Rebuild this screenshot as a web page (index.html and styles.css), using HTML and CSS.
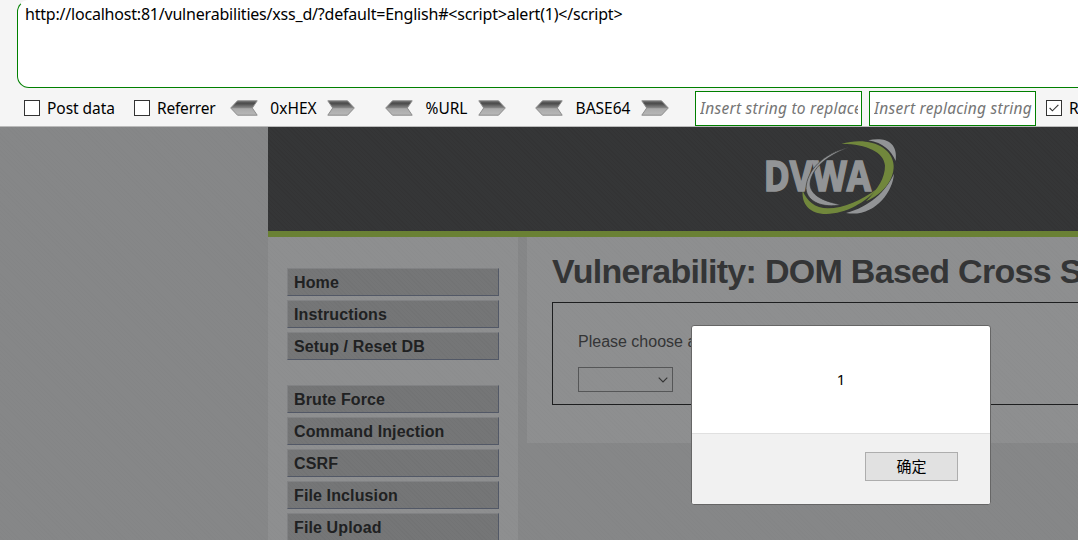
FILE: index.html
```html
<!DOCTYPE html>
<html lang="en">
<head>
<meta charset="utf-8">
<title>Vulnerability: DOM Based Cross Site Scripting</title>
<link rel="stylesheet" href="styles.css">
</head>
<body>
<svg class="defs" width="0" height="0" aria-hidden="true">
  <defs>
    <linearGradient id="metal" x1="0" y1="0" x2="0" y2="1">
      <stop offset="0" stop-color="#666"/><stop offset=".2" stop-color="#4c4c4c"/>
      <stop offset=".48" stop-color="#858585"/><stop offset=".55" stop-color="#aaa"/><stop offset="1" stop-color="#b8b8b8"/>
    </linearGradient>
    <symbol id="arrow" viewBox="0 0 28 16">
      <path d="M.7 8 7.5.8H27.2L22.3 8l4.9 7.2H7.5Z" fill="url(#metal)" stroke="#8c8c8c"/>
    </symbol>
  </defs>
</svg>
<section class="toolbar">
  <div class="url"><span class="url-text">http://localhost:81/vulnerabilities/xss_d/?default=English#&lt;script&gt;alert(1)&lt;/script&gt;</span></div>
  <div class="tools">
    <span class="check"></span><span class="post">Post data</span>
    <span class="check"></span><span class="referrer">Referrer</span>
    <div class="codec hex"><svg class="arrow"><use href="#arrow"/></svg><span>0xHEX</span><svg class="arrow next"><use href="#arrow"/></svg></div>
    <div class="codec percent"><svg class="arrow"><use href="#arrow"/></svg><span>%URL</span><svg class="arrow next"><use href="#arrow"/></svg></div>
    <div class="codec base"><svg class="arrow"><use href="#arrow"/></svg><span>BASE64</span><svg class="arrow next"><use href="#arrow"/></svg></div>
    <div class="field"><span class="find">Insert string to replace</span></div>
    <div class="field"><span class="replace">Insert replacing string</span></div>
    <span class="check last"><svg viewBox="0 0 16 16"><path d="M3 8l3.2 3.2L13 4.4" fill="none" stroke="#333" stroke-width="1.3"/></svg></span><span>Replace All</span>
  </div>
</section>
<main class="page">
  <div class="site">
    <header class="header">
      <svg class="logo" viewBox="60 30 420 255">
        <g fill="#929496">
          <path d="M385 46C425 36 476 44 467 108C454 78 430 53 385 46Z"/>
          <path d="M462 146C458 203 402 278 318 264C388 245 438 200 462 146Z"/>
        </g>
        <path d="M304 57C382 34 458 63 461 122C462 161 433 205 378 229C415 190 435 158 435 122C432 80 376 56 304 57Z" fill="#71873c"/>
        <path d="M188 197C184 235 208 267 259 267C318 267 378 231 414 190C361 228 311 250 264 250C224 249 201 228 188 197Z" fill="#71873c"/>
        <text class="brand" x="71" y="198" textLength="322" lengthAdjust="spacingAndGlyphs">DVWA</text>
        <path class="ring" d="M328 67C250 84 200 137 198 190C200 232 252 250 302 239C250 229 210 210 210 176C214 130 262 91 328 67Z"/>
      </svg>
    </header>
    <div class="columns">
      <nav class="menu">
        <a>Home</a><a>Instructions</a><a>Setup / Reset DB</a>
        <a class="group">Brute Force</a><a>Command Injection</a><a>CSRF</a><a>File Inclusion</a><a>File Upload</a>
      </nav>
      <article class="content">
        <h1>Vulnerability: DOM Based Cross Site Scripting (XSS)</h1>
        <div class="panel">
          <p>Please choose a language:</p>
          <div class="select"><svg viewBox="0 0 10 6"><path d="M.7.7 5 5 9.3.7" fill="none" stroke="#333" stroke-width="1.1"/></svg></div>
        </div>
      </article>
    </div>
  </div>
</main>
<div class="dialog" role="alertdialog">
  <div class="message">1</div>
  <div class="actions"><div class="confirm">确定</div></div>
</div>
</body>
</html>
```

FILE: styles.css
```css
* { box-sizing: border-box; }
body { margin: 0; width: 1078px; height: 540px; overflow: hidden; position: relative; font: 16px/20px "Noto Sans", "Noto Sans CJK SC", sans-serif; color: #000; }
.defs { position: absolute; }
.toolbar { height: 127px; background: #f5f5f5; border-bottom: 1px solid #bbb; overflow: hidden; }
.url { width: 1100px; height: 88px; margin-left: 17px; padding: 3px 7px; background: #fff; border: 1px solid green; border-top-color: #fff; border-radius: 12px 0 0 12px; white-space: nowrap; }
.url-text { letter-spacing: -.205px; }
.tools { display: flex; align-items: center; width: 1300px; height: 40px; padding-left: 24px; white-space: nowrap; font-size: 15.5px; }
.check { flex: none; width: 16px; height: 16px; margin-right: 7px; border: 1px solid #333; background: #fff; }
.check svg { display: block; width: 14px; height: 14px; }
.post { width: 87px; letter-spacing: -.05px; }
.referrer { width: 73px; letter-spacing: -.2px; }
.codec { display: flex; align-items: center; justify-content: space-between; flex: none; }
.codec span { padding-left: 2px; }
.hex { width: 125px; }
.percent { width: 121px; margin-left: 30px; }
.base { width: 134px; margin: 0 26px 0 29px; }
.arrow { width: 28px; height: 16px; }
.next { transform: scaleX(-1); }
.field { flex: none; width: 167px; height: 35px; margin: 1px 7px 0 0; padding: 6px 4px; border: 1px solid green; background: #fff; color: #757575; font-style: italic; }
.field span { display: block; width: 158px; overflow: hidden; letter-spacing: .26px; }
.last { margin-left: 3px; }
.page { height: 413px; padding-left: 268px; overflow: hidden; background: repeating-linear-gradient(45deg, #0000 0 2px, #00000003 2px 3px), #868788; font-family: "Liberation Sans", Arial, sans-serif; }
.site { width: 900px; }
.header { height: 110px; padding: 8px 0 0 492px; background: repeating-linear-gradient(45deg, #0000 0 2px, #0000000c 2px 3px), #353637; border-bottom: 6px solid #6a8134; }
.logo { display: block; width: 140px; height: 85px; }
.brand { font: 700 122px "Open Sans", sans-serif; fill: #929496; stroke: #929496; stroke-width: 5px; }
.ring { fill: #929496; stroke: #353637; stroke-width: 2px; }
.columns { display: flex; align-items: flex-start; gap: 9px; }
.menu { flex: none; width: 250px; height: 303px; padding: 31px 19px 0; background: repeating-linear-gradient(45deg, #0000 0 2px, #00000003 2px 3px), #8e8f90; }
.menu a { display: block; height: 28px; margin-bottom: 4px; padding: 4px 6px; background: repeating-linear-gradient(45deg, #0000 0 2px, #00000006 2px 3px), #757677; border: 1px solid #818284; border-right-color: #525866; border-bottom-color: #525866; color: #202122; font-weight: 700; letter-spacing: .12px; }
.menu .group { margin-top: 25px; }
.content { flex: 1; height: 206px; padding: 14px 0 0 25px; background: repeating-linear-gradient(45deg, #0000 0 2px, #00000003 2px 3px), #8e8f90; color: #343536; white-space: nowrap; }
h1 { height: 40px; margin: 0 0 11px; font-size: 34px; line-height: 40px; letter-spacing: -.71px; }
.panel { height: 103px; padding: 29px 25px 0; border: 1px solid #1d1e1f; }
.panel p { margin: 0 0 15px; }
.select { display: flex; align-items: center; justify-content: flex-end; width: 95px; height: 25px; padding-right: 4px; border: 1px solid #555657; }
.select svg { width: 10px; height: 6px; }
.dialog { position: absolute; left: 691px; top: 325px; width: 300px; height: 180px; border: 1px solid #666; border-radius: 3px; background: #fff; overflow: hidden; font-size: 15px; }
.message { height: 107px; padding-top: 43px; text-align: center; }
.actions { height: 71px; display: flex; justify-content: flex-end; padding: 18px 32px 0; border-top: 1px solid #e0e0e0; background: #f1f1f1; }
.confirm { width: 93px; height: 29px; border: 1px solid #adadad; background: #e1e1e1; text-align: center; line-height: 27px; }
```
